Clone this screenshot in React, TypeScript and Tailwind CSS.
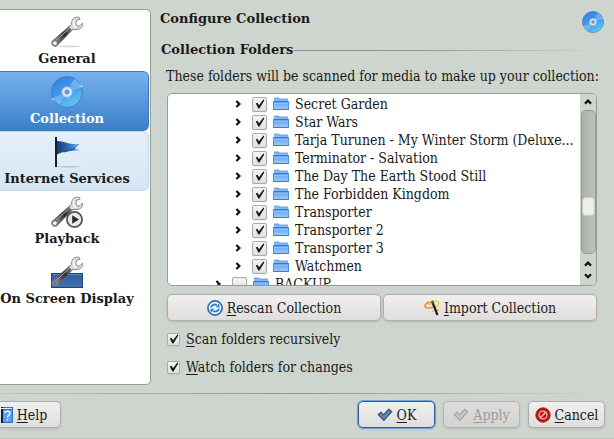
import { ReactNode } from 'react';

/* ---------- icons ---------- */

function Disc({ className, id }: { className: string; id: string }) {
  return (
    <svg viewBox="0 0 32 32" className={className} aria-hidden="true">
      <defs>
        <linearGradient id={id} x1="0.2" y1="0" x2="0.7" y2="1">
          <stop offset="0" stopColor="#2f80e6" />
          <stop offset="0.5" stopColor="#469aeb" />
          <stop offset="1" stopColor="#62c8f4" />
        </linearGradient>
      </defs>
      <circle cx="16" cy="16" r="15.4" fill={`url(#${id})`} stroke="#3a79b8" strokeWidth="0.9" />
      <path d="M16 16 L23 2.6 A15.2 15.2 0 0 1 30.6 11 Z" fill="#86c1f5" opacity="0.6" />
      <path d="M16 16 L1.2 22.6 A15.2 15.2 0 0 0 8 28.6 Z" fill="#8cc8f6" opacity="0.5" />
      <path d="M28.5 10.6 L31.8 8.6 L31 11.6 Z" fill="#b9dcf8" />
      <path d="M3.5 21.6 L0.4 23.8 L2 24.2 Z" fill="#b9dcf8" />
      <circle cx="16" cy="16" r="5.2" fill="#d5e4f0" stroke="#9bbbd6" strokeWidth="0.7" />
      <circle cx="16" cy="16" r="2.2" fill="#5a9bdc" stroke="#7f98ad" strokeWidth="0.7" />
    </svg>
  );
}

function WrenchShape({ id }: { id: string }) {
  return (
    <>
      <defs>
        <linearGradient id={id} x1="0" y1="1" x2="1" y2="0">
          <stop offset="0" stopColor="#a8a8a8" />
          <stop offset="0.3" stopColor="#6f6f6f" />
          <stop offset="0.6" stopColor="#2b2b2b" />
          <stop offset="1" stopColor="#999999" />
        </linearGradient>
      </defs>
      <path d="M2 24.5 L18.5 10 L22 13.2 L6.6 29.2 A3.3 3.3 0 1 1 2 24.5 Z" fill={`url(#${id})`} stroke="#666666" strokeWidth="0.7" />
      <path d="M5 24.5 L17.5 13" stroke="#c4c4c4" strokeWidth="0.8" />
      <path
        d="M17.8 11.2 C20.6 9.6 20.3 7.2 21 4.7 C22 1.8 25 0.4 28.6 1.5 L28.9 3.2 L25.9 4 L24.7 7.5 L26.8 10.4 L29.5 9.3 L31.5 7 C32.3 11 29.5 13.6 26 13.4 L22 13.6 L20.4 14 Z"
        fill="#dddddd"
        stroke="#737373"
        strokeWidth="0.8"
      />
      <path d="M22.8 5 C22 8 22.7 10 24.8 12" fill="none" stroke="#ffffff" strokeWidth="1.2" />
      <circle cx="3.9" cy="27.1" r="2.6" fill="#f6f6f6" stroke="#777777" strokeWidth="1.3" />
    </>
  );
}

function Wrench() {
  return (
    <svg viewBox="0 0 32 32" className="size-8" aria-hidden="true">
      <ellipse cx="18" cy="30.4" rx="12" ry="0.9" fill="#d8d8d8" />
      <WrenchShape id="wrench-general" />
    </svg>
  );
}

function WrenchPlay() {
  return (
    <svg viewBox="0 0 32 32" className="size-8" aria-hidden="true">
      <WrenchShape id="wrench-playback" />
      <circle cx="23.5" cy="23.5" r="7.6" fill="#e9e9e9" stroke="#555555" strokeWidth="1.8" />
      <path d="M21.2 19.2 L28 23.5 L21.2 27.8 Z" fill="#2c2c2c" />
    </svg>
  );
}

function WrenchScreen() {
  return (
    <svg viewBox="0 0 32 32" className="size-8" aria-hidden="true">
      <defs>
        <linearGradient id="screen" x1="0" y1="0" x2="0" y2="1">
          <stop offset="0" stopColor="#2c5c9d" />
          <stop offset="1" stopColor="#3f74b6" />
        </linearGradient>
      </defs>
      <rect x="0.5" y="17.5" width="31" height="14" fill="url(#screen)" stroke="#1f4478" />
      <path d="M1.5 18.6 H30.5" stroke="#6690c6" strokeWidth="0.8" />
      <WrenchShape id="wrench-screen" />
      <circle cx="3.9" cy="27.1" r="1.9" fill="#3f74b6" />
    </svg>
  );
}

function Flag() {
  return (
    <svg viewBox="0 0 32 32" className="size-8" aria-hidden="true">
      <defs>
        <linearGradient id="flag" x1="0" y1="0" x2="1" y2="0">
          <stop offset="0" stopColor="#123b78" />
          <stop offset="0.5" stopColor="#2c6cb8" />
          <stop offset="1" stopColor="#6db4ea" />
        </linearGradient>
      </defs>
      <ellipse cx="18" cy="30.8" rx="12" ry="0.8" fill="#b9c3cd" />
      <path d="M6 5 C13 5 18 9 28.5 8 L24 12.5 L28.5 14.5 C19 14.5 12 15.5 6 18.5 Z" fill="url(#flag)" />
      <path d="M13 16 C18 14.5 21 13.5 24 12.5" fill="none" stroke="#153f78" strokeWidth="0.8" />
      <rect x="4" y="1" width="2" height="30" fill="#1d1d1d" />
    </svg>
  );
}

function Folder() {
  return (
    <svg viewBox="0 0 16 14" className="h-3.5 w-4 shrink-0" aria-hidden="true">
      <defs>
        <linearGradient id="folder" x1="0" y1="0" x2="0" y2="1">
          <stop offset="0" stopColor="#5b9eee" />
          <stop offset="1" stopColor="#a2cdfc" />
        </linearGradient>
      </defs>
      <path d="M1 5 V1 H6 V2 H15 V5 Z" fill="#86b8f2" />
      <path d="M1 1 H6 V2 H15" fill="none" stroke="#5d97de" strokeWidth="0.8" />
      <rect y="4" width="16" height="9" fill="url(#folder)" />
      <path d="M0 4.5 H16" stroke="#3479d6" />
      <path d="M0.5 4 V12 M15.5 4 V12" stroke="#4f93e8" />
      <path d="M1 6.5 H15" stroke="#8dc0f8" />
      <path d="M0 12.5 H16" stroke="#4c78b0" />
    </svg>
  );
}

function Chevron({ className, down }: { className: string; down?: boolean }) {
  return (
    <svg viewBox="0 0 8 6" className={className} aria-hidden="true">
      <path d={down ? 'M1 1.2 L4 4.2 L7 1.2' : 'M1 4.6 L4 1.6 L7 4.6'} fill="none" stroke="#111111" strokeWidth="2.2" />
    </svg>
  );
}

function Refresh() {
  return (
    <svg viewBox="0 0 16 16" className="size-4" aria-hidden="true">
      <circle cx="8" cy="8" r="7.1" fill="#f3f7fb" stroke="#2b6cb4" strokeWidth="1.7" />
      <path d="M4 7.4 C4.6 4.8 7.6 3.8 9.8 5" fill="none" stroke="#2b7bcb" strokeWidth="1.9" />
      <path d="M8.6 7.3 L12.6 7.3 L12.2 3.2 Z" fill="#2b7bcb" />
      <path d="M12 8.6 C11.4 11.2 8.4 12.2 6.2 11" fill="none" stroke="#2b7bcb" strokeWidth="1.9" />
      <path d="M7.4 8.7 L3.4 8.7 L3.8 12.8 Z" fill="#2b7bcb" />
    </svg>
  );
}

function Wand() {
  return (
    <svg viewBox="0 0 16 16" className="size-4" aria-hidden="true">
      <path d="M2 3 L6 1.6 L9.5 4.4 L5 5.6 Z" fill="#d9c3bb" />
      <path d="M6 1.9 C10 0.3 15.4 1 14.8 3.8 C14.4 5.6 12 6.6 9 7.2" fill="none" stroke="#fbd02c" strokeWidth="1.6" />
      <path d="M6 2.2 C2.6 2.8 0.4 4.6 0.9 6.2 C1.5 8 5 8.2 9 7.2" fill="none" stroke="#f7931e" strokeWidth="1.6" />
      <path d="M8.2 1.4 L13.4 15" stroke="#1c1c1c" strokeWidth="2.2" />
      <path d="M8 0.8 L9 3.6" stroke="#555555" strokeWidth="1.8" />
      <circle cx="13.8" cy="10.3" r="1" fill="#f0836a" />
      <circle cx="8.6" cy="11" r="0.8" fill="#f0a07a" />
      <circle cx="3.4" cy="1.9" r="0.7" fill="#f0836a" />
    </svg>
  );
}

function Tick({ muted }: { muted?: boolean }) {
  return (
    <svg viewBox="0 0 16 16" className="size-4" aria-hidden="true">
      <path
        d="M1.2 7.6 L4 5.2 L6.6 7.8 L11.8 2.2 L14.8 4.6 L6.9 13.4 Z"
        fill={muted ? '#c3c3c3' : '#5f86ad'}
        stroke={muted ? '#a4a4a4' : '#2b4c6e'}
        strokeWidth="1.1"
        strokeLinejoin="round"
      />
    </svg>
  );
}

function Forbidden() {
  return (
    <svg viewBox="0 0 16 16" className="size-4" aria-hidden="true">
      <circle cx="8" cy="8" r="7.2" fill="#c4150e" stroke="#8e120d" strokeWidth="0.8" />
      <circle cx="8" cy="8" r="3.9" fill="#b3120c" stroke="#e3b3b0" strokeWidth="1.4" />
      <path d="M5.2 10.8 L10.8 5.2" stroke="#e3b3b0" strokeWidth="1.8" />
    </svg>
  );
}

function HelpBook() {
  return (
    <svg viewBox="0 0 12 16" className="h-4 w-3" aria-hidden="true">
      <rect width="12" height="16" fill="#2a6fd0" />
      <rect width="2" height="16" fill="#12223c" />
      <rect y="1" width="11" height="1" fill="#dfeafa" />
      <rect x="2" y="3" width="9" height="12" fill="#5b9cf0" />
      <path d="M4 6.2 C4 3.4 9 3.4 9 6.2 C9 8.2 6.5 8 6.5 10.6" fill="none" stroke="#ffffff" strokeWidth="1.3" />
      <rect x="5.8" y="12" width="1.4" height="1.5" fill="#ffffff" />
    </svg>
  );
}

/* ---------- controls ---------- */

function CheckBox({ id, checked, size }: { id: string; checked: boolean; size: string }) {
  return (
    <span className="grid shrink-0 place-items-center">
      <input
        id={id}
        type="checkbox"
        defaultChecked={checked}
        className={`peer col-start-1 row-start-1 appearance-none rounded-xs border border-[#a9aba8] bg-linear-to-b from-[#f4f4f3] to-[#e2e0df] shadow-xs ${size}`}
      />
      <svg viewBox="0 0 10 10" className="pointer-events-none invisible col-start-1 row-start-1 size-2.5 peer-checked:visible" aria-hidden="true">
        <path d="M0.8 4.6 L2.4 3.8 L4 6.2 L8.4 0.6 L9.4 1.2 L4.4 9.4 L3.4 9.4 Z" fill="#151515" />
      </svg>
    </span>
  );
}

interface PushButtonProps {
  icon: ReactNode;
  mnemonic: string;
  rest: string;
  className: string;
  disabled?: boolean;
}

function PushButton({ icon, mnemonic, rest, className, disabled }: PushButtonProps) {
  return (
    <button
      type="button"
      disabled={disabled}
      className={`flex h-[27px] items-center justify-center rounded-[5px] border bg-linear-to-b shadow-sm ${className}`}
    >
      {icon}
      <span>
        <u className="decoration-1 underline-offset-2">{mnemonic}</u>
        {rest}
      </span>
    </button>
  );
}

const normalButton = 'border-[#adaeab] from-[#f0f0ef] to-[#e0dedd]';

const boldText = "font-['DejaVu_Serif',serif] text-[13px] leading-4 font-bold whitespace-nowrap";

const pages = [
  { label: 'General', icon: <Wrench />, style: 'border-transparent' },
  {
    label: 'Collection',
    icon: <Disc className="size-8" id="disc-nav" />,
    style: 'rounded-r-md border-[#3a78bd] bg-linear-to-b from-[#78b1f0] to-[#3880c9] text-white',
  },
  {
    label: 'Internet Services',
    icon: <Flag />,
    style: 'rounded-r-md border-[#c3d8ec] bg-linear-to-b from-[#e5effb] to-[#d6e6f5]',
  },
  { label: 'Playback', icon: <WrenchPlay />, style: 'border-transparent' },
  { label: 'On Screen Display', icon: <WrenchScreen />, style: 'border-transparent' },
];

const folders = [
  'Secret Garden',
  'Star Wars',
  'Tarja Turunen - My Winter Storm (Deluxe...',
  'Terminator - Salvation',
  'The Day The Earth Stood Still',
  'The Forbidden Kingdom',
  'Transporter',
  'Transporter 2',
  'Transporter 3',
  'Watchmen',
];

function FolderRow({ name, checked, indent }: { name: string; checked: boolean; indent: string }) {
  const id = `folder-${name}`;
  return (
    <li className={`flex h-[18px] items-center ${indent}`}>
      <Chevron className="h-1.5 w-2 shrink-0 rotate-90" />
      <span className="ml-2.5 flex">
        <CheckBox id={id} checked={checked} size="size-[15px]" />
      </span>
      <label htmlFor={id} className="ml-1.5 flex items-center gap-1.5 whitespace-nowrap">
        <Folder />
        {name}
      </label>
    </li>
  );
}

function ScrollBar() {
  return (
    <div className="flex w-4 shrink-0 flex-col items-center bg-[#ced5ce]">
      <Chevron className="my-[5px] h-1.5 w-2" />
      <div className="flex w-[15px] flex-1 flex-col rounded-[5px] border border-[#959d94] bg-linear-to-r from-[#a9b1a8] to-[#bcc3bb]">
        <div className="grow-[87]" />
        <div className="h-[19px] rounded-sm border border-[#c9c9c7] bg-[#eeeded]" />
        <div className="grow-[37]" />
      </div>
      <Chevron className="mt-[7px] h-1.5 w-2" />
      <Chevron className="my-[6px] h-1.5 w-2" down />
    </div>
  );
}

export default function App() {
  return (
    <div className="flex min-h-screen flex-col bg-[#ced5ce] font-['DejaVu_Serif_Condensed','DejaVu_Serif',serif] text-sm leading-4 text-[#1a1a1a]">
      <div className="flex">
        <nav className="mt-[9px] w-[151px] shrink-0 overflow-hidden rounded-r-[5px] border border-l-0 border-[#959d94] bg-white pt-px pr-px">
          {pages.map((page) => (
            <a
              key={page.label}
              href="#"
              className={`flex h-[60px] flex-col items-center border border-l-0 pt-1 pr-3.5 ${boldText} ${page.style}`}
            >
              {page.icon}
              <span className="mt-[3px]">{page.label}</span>
            </a>
          ))}
        </nav>

        <main className="flex min-w-0 flex-1 flex-col pt-[11px] pr-2.5 pb-2.5 pl-[9px]">
          <header className="flex items-start justify-between">
            <h1 className={boldText}>Configure Collection</h1>
            <Disc className="size-[22px]" id="disc-header" />
          </header>

          <section className="pr-[7px]">
            <div className="mt-[9px] flex items-center pl-px">
              <h2 className={boldText}>Collection Folders</h2>
              <div className="ml-px h-px flex-1 bg-linear-to-r from-[#8a9289] via-[#8f978e] via-40% to-transparent" />
            </div>

            <div className="pl-[7px]">
              <p className="mt-2.5 -ml-px whitespace-nowrap">These folders will be scanned for media to make up your collection:</p>

              <div className="mt-[9px] flex h-[193px] overflow-hidden rounded-[5px] border border-[#959d94] bg-white">
                <ul className="min-w-0 flex-1 overflow-hidden pt-px">
                  {folders.map((name) => (
                    <FolderRow key={name} name={name} checked indent="pl-[66px]" />
                  ))}
                  <FolderRow name="BACKUP" checked={false} indent="pl-[46px]" />
                </ul>
                <ScrollBar />
              </div>

              <div className="mt-2 flex gap-0.5">
                <PushButton icon={<Refresh />} mnemonic="R" rest="escan Collection" className={`flex-1 gap-1 ${normalButton}`} />
                <PushButton icon={<Wand />} mnemonic="I" rest="mport Collection" className={`flex-1 gap-1 ${normalButton}`} />
              </div>

              <div className="mt-2.5 flex items-center gap-1.5">
                <CheckBox id="recursive" checked size="size-[13px]" />
                <label htmlFor="recursive">
                  <u className="decoration-1 underline-offset-2">S</u>can folders recursively
                </label>
              </div>
              <div className="mt-3 flex items-center gap-1.5">
                <CheckBox id="watch" checked size="size-[13px]" />
                <label htmlFor="watch">
                  <u className="decoration-1 underline-offset-2">W</u>atch folders for changes
                </label>
              </div>
            </div>
          </section>
        </main>
      </div>

      <div className="mt-2 mr-2.5 h-px bg-linear-to-r from-[#bcc3bb] via-[#8f978e] to-transparent" />

      <footer className="mt-[7px] flex gap-2 pr-[9px]">
        <PushButton
          icon={<HelpBook />}
          mnemonic="H"
          rest="elp"
          className={`w-[61px] gap-1 rounded-l-none border-l-0 pr-3 ${normalButton}`}
        />
        <div className="flex-1" />
        <PushButton
          icon={<Tick />}
          mnemonic="O"
          rest="K"
          className="w-[77px] gap-1 border-[#2f5f9f] from-[#f0f0ef] to-[#e0dedd] ring-1 ring-[#6a9fe0]"
        />
        <PushButton
          icon={<Tick muted />}
          mnemonic="A"
          rest="pply"
          disabled
          className="w-[77px] gap-1 border-[#b3b4b1] from-[#dedcdc] to-[#d5d3d2] text-[#9c9c9b]"
        />
        <PushButton icon={<Forbidden />} mnemonic="C" rest="ancel" className={`w-[77px] gap-1 ${normalButton}`} />
      </footer>

      <div className="mt-auto h-px bg-[#bfc6bf]" />
    </div>
  );
}
